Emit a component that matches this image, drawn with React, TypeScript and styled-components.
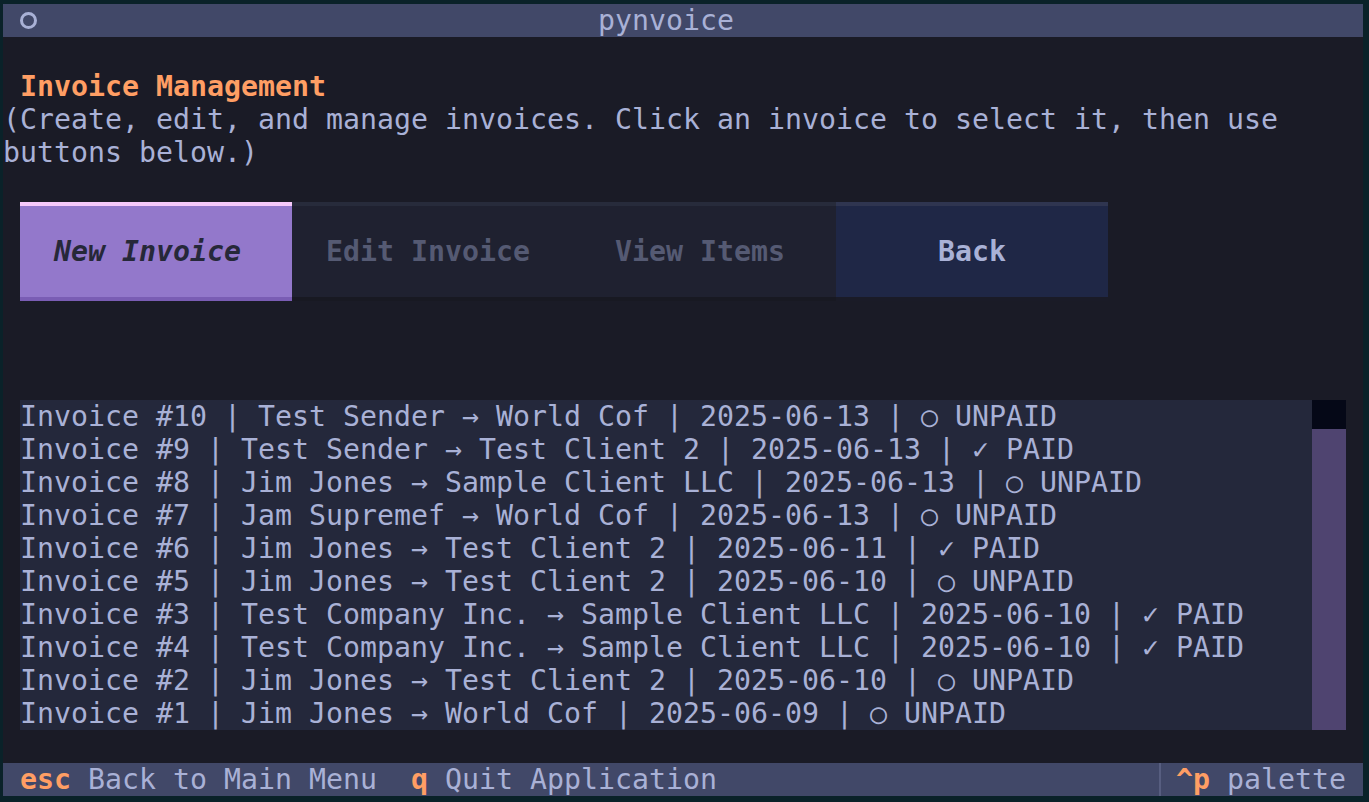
import React from "react";
import styled, { createGlobalStyle, css } from "styled-components";

const CW = 17;
const CH = 33;

const Global = createGlobalStyle`
  html, body { margin: 0; padding: 0; background: #0a2229; }
  body { width: 1369px; height: 802px; overflow: hidden; }
`;

const Frame = styled.div`
  width: 1369px;
  height: 802px;
  box-sizing: border-box;
  padding: 4px 6px 6px 3px;
  background: #0a2229;
`;

const Screen = styled.div`
  width: ${80 * CW}px;
  height: ${24 * CH}px;
  background: #1a1b26;
  display: flex;
  flex-direction: column;
  font-family: "DejaVu Sans Mono", "Liberation Mono", monospace;
  font-size: 28.24px;
  line-height: ${CH}px;
  color: #a9b1d6;
  white-space: pre;
  overflow: hidden;
`;

const Header = styled.header`
  flex: none;
  height: ${CH}px;
  background: #414868;
  display: grid;
  grid-template-columns: ${8 * CW}px 1fr ${10 * CW}px;
  align-items: center;
`;

const HeaderIcon = styled.span`
  display: flex;
  align-items: center;
  padding-left: ${CW}px;
  height: ${CH}px;
`;

const Ring = styled.span`
  display: block;
  box-sizing: border-box;
  width: 17px;
  height: 17px;
  border: 3px solid #a9b1d6;
  border-radius: 50%;
`;

const HeaderTitle = styled.span`
  text-align: center;
`;

const Blank = styled.div<{ $rows: number }>`
  flex: none;
  height: ${(p) => p.$rows * CH}px;
`;

const Title = styled.h1`
  margin: 0;
  flex: none;
  padding-left: ${CW}px;
  font-size: inherit;
  line-height: ${CH}px;
  font-weight: bold;
  color: #ff9e64;
`;

const Desc = styled.p`
  margin: 0;
  flex: none;
  white-space: normal;
  height: ${2 * CH}px;
`;

const ButtonRow = styled.div`
  flex: none;
  display: flex;
  margin-left: ${CW}px;
  height: ${3 * CH}px;
`;

type Variant = "focused" | "disabled" | "default";

const variants = {
  focused: css`
    background: #9378cb;
    border-top-color: #f6c9fa;
    border-bottom-color: #7a5db4;
    color: #262839;
    font-style: italic;
  `,
  disabled: css`
    background: #1f2130;
    border-top-color: #272b3b;
    border-bottom-color: #181922;
    color: #555a73;
  `,
  default: css`
    background: #1f2746;
    border-top-color: #2f3550;
    border-bottom-color: #1a1b27;
    color: #a9b1d6;
  `,
};

const Btn = styled.div<{ $variant: Variant; $lead: number }>`
  box-sizing: border-box;
  width: ${16 * CW}px;
  height: ${3 * CH}px;
  border-top: 4px solid transparent;
  border-bottom: 4px solid transparent;
  display: flex;
  align-items: center;
  padding-left: ${(p) => (1 + p.$lead) * CW}px;
  font-weight: bold;
  ${(p) => variants[p.$variant]}
`;

const Button = ({ label, variant }: { label: string; variant: Variant }) => (
  <Btn $variant={variant} $lead={Math.floor((14 - label.length) / 2)}>
    {label}
  </Btn>
);

const ListPanel = styled.div`
  flex: none;
  margin-left: ${CW}px;
  width: ${78 * CW}px;
  height: ${10 * CH}px;
  display: flex;
  background: #24283b;
`;

const ListBody = styled.div`
  flex: 1;
  display: flex;
  flex-direction: column;
`;

const Line = styled.div`
  height: ${CH}px;
`;

const Scrollbar = styled.div`
  width: ${2 * CW}px;
  display: flex;
  flex-direction: column;
  background: #050817;
`;

const Thumb = styled.div`
  margin-top: 29px;
  flex: 1;
  background: #4f4470;
`;

const Footer = styled.footer`
  flex: none;
  height: ${CH}px;
  background: #414868;
  display: flex;
`;

const Binding = styled.span`
  padding: 0 ${CW}px;
`;

const Key = styled.span`
  color: #ff9e64;
  font-weight: bold;
`;

const Palette = styled.span`
  margin-left: auto;
  box-sizing: border-box;
  width: ${12 * CW}px;
  border-left: 2px solid #575e80;
  padding-left: ${CW - 2}px;
`;

const invoices = [
  "Invoice #10 | Test Sender → World Cof | 2025-06-13 | ○ UNPAID",
  "Invoice #9 | Test Sender → Test Client 2 | 2025-06-13 | ✓ PAID",
  "Invoice #8 | Jim Jones → Sample Client LLC | 2025-06-13 | ○ UNPAID",
  "Invoice #7 | Jam Supremef → World Cof | 2025-06-13 | ○ UNPAID",
  "Invoice #6 | Jim Jones → Test Client 2 | 2025-06-11 | ✓ PAID",
  "Invoice #5 | Jim Jones → Test Client 2 | 2025-06-10 | ○ UNPAID",
  "Invoice #3 | Test Company Inc. → Sample Client LLC | 2025-06-10 | ✓ PAID",
  "Invoice #4 | Test Company Inc. → Sample Client LLC | 2025-06-10 | ✓ PAID",
  "Invoice #2 | Jim Jones → Test Client 2 | 2025-06-10 | ○ UNPAID",
  "Invoice #1 | Jim Jones → World Cof | 2025-06-09 | ○ UNPAID",
];

export default function App() {
  return (
    <>
      <Global />
      <Frame>
        <Screen>
          <Header>
            <HeaderIcon>
              <Ring />
            </HeaderIcon>
            <HeaderTitle>pynvoice</HeaderTitle>
            <span />
          </Header>
          <Blank $rows={1} />
          <Title>Invoice Management</Title>
          <Desc>
            (Create, edit, and manage invoices. Click an invoice to select it, then use buttons below.)
          </Desc>
          <Blank $rows={1} />
          <ButtonRow>
            <Button label="New Invoice" variant="focused" />
            <Button label="Edit Invoice" variant="disabled" />
            <Button label="View Items" variant="disabled" />
            <Button label="Back" variant="default" />
          </ButtonRow>
          <Blank $rows={3} />
          <ListPanel>
            <ListBody>
              {invoices.map((t) => (
                <Line key={t}>{t}</Line>
              ))}
            </ListBody>
            <Scrollbar>
              <Thumb />
            </Scrollbar>
          </ListPanel>
          <Blank $rows={1} />
          <Footer>
            <Binding>
              <Key>esc</Key> Back to Main Menu
            </Binding>
            <Binding>
              <Key>q</Key> Quit Application
            </Binding>
            <Palette>
              <Key>^p</Key> palette
            </Palette>
          </Footer>
        </Screen>
      </Frame>
    </>
  );
}
